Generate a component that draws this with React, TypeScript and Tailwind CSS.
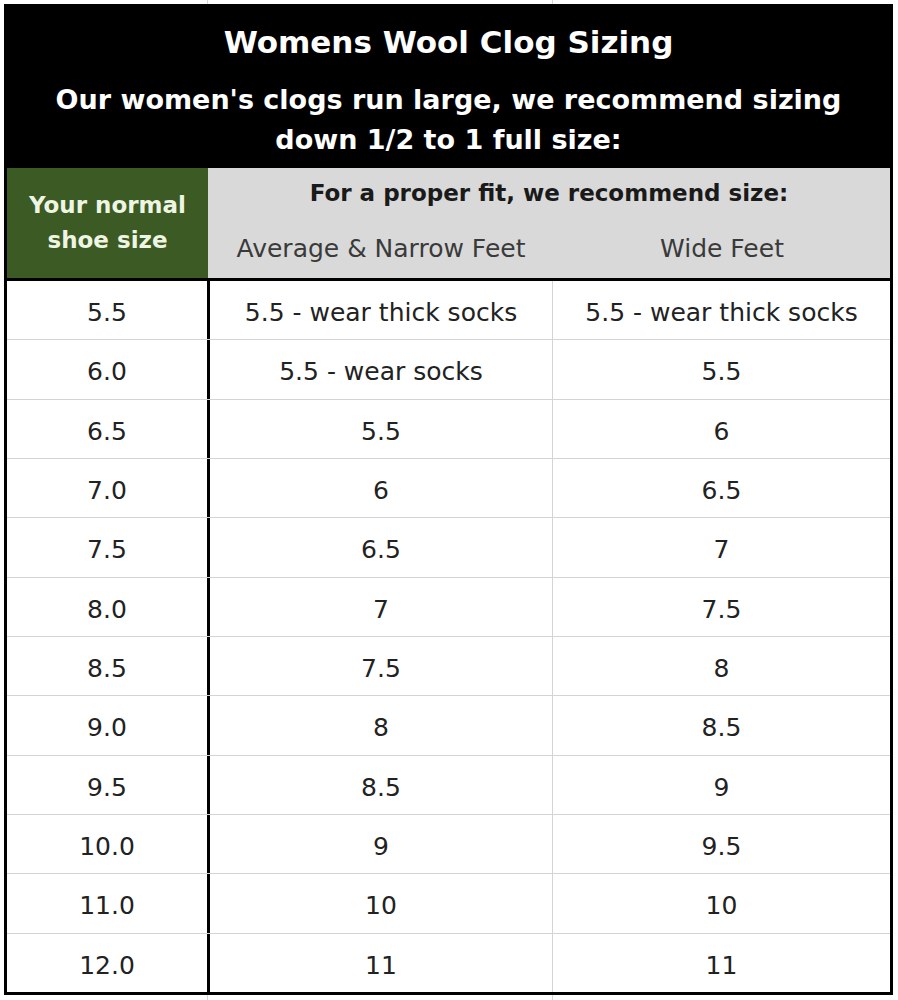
const rows: [string, string, string][] = [
  ["5.5", "5.5 - wear thick socks", "5.5 - wear thick socks"],
  ["6.0", "5.5 - wear socks", "5.5"],
  ["6.5", "5.5", "6"],
  ["7.0", "6", "6.5"],
  ["7.5", "6.5", "7"],
  ["8.0", "7", "7.5"],
  ["8.5", "7.5", "8"],
  ["9.0", "8", "8.5"],
  ["9.5", "8.5", "9"],
  ["10.0", "9", "9.5"],
  ["11.0", "10", "10"],
  ["12.0", "11", "11"],
];

const font = { fontFamily: '"DejaVu Sans", "Liberation Sans", sans-serif' };

export default function App() {
  return (
    <div className="w-[898px] h-[1000px] bg-white overflow-hidden" style={font}>
      {/* spreadsheet gridlines above */}
      <div className="flex h-[4px]">
        <div className="w-[208px] border-r border-[#d6d6d6]" />
        <div className="w-[345px] border-r border-[#d6d6d6]" />
      </div>

      <div className="ml-[4px] w-[889px] border-[3px] border-black">
        {/* title block */}
        <div className="h-[161px] bg-black text-white font-bold text-center pt-[15px]">
          <div className="text-[31px] leading-[40px]">Womens Wool Clog Sizing</div>
          <div className="mt-[18px] text-[27px] leading-[40px]">
            Our women's clogs run large, we recommend sizing
            <br />
            down 1/2 to 1 full size:
          </div>
        </div>

        {/* column headers */}
        <div className="flex h-[110px] border-b-[3px] border-black box-content">
          <div className="w-[201px] bg-[#3b5a24] flex items-center justify-center text-center">
            <div className="text-[23px] leading-[35px] font-bold text-[#eef5e2]">
              Your normal
              <br />
              shoe size
            </div>
          </div>
          <div className="flex-1 bg-[#d9d9d9] pt-[8px]">
            <div className="text-center text-[23px] leading-[34px] font-bold text-[#1a1a1a]">
              For a proper fit, we recommend size:
            </div>
            <div className="mt-[22px] flex text-[25px] leading-[34px] text-[#3a3a3a]">
              <div className="w-[346px] text-center">Average &amp; Narrow Feet</div>
              <div className="flex-1 text-center">Wide Feet</div>
            </div>
          </div>
        </div>

        {/* size rows */}
        <div className="flex flex-col h-[711px]">
          {rows.map(([normal, avg, wide], i) => (
            <div
              key={normal}
              className={`flex flex-1 text-[25px] text-[#222222] ${i > 0 ? "border-t border-[#d4d4d4]" : ""}`}
            >
              <div className="w-[200px] flex items-center justify-center pt-[5px]">{normal}</div>
              <div className="w-[3px] bg-black" />
              <div className="w-[343px] flex items-center justify-center pt-[5px] border-r border-[#d4d4d4]">
                {avg}
              </div>
              <div className="flex-1 flex items-center justify-center pt-[5px]">{wide}</div>
            </div>
          ))}
        </div>
      </div>

      {/* spreadsheet gridlines below */}
      <div className="flex h-[5px]">
        <div className="w-[208px] border-r border-[#d6d6d6]" />
        <div className="w-[345px] border-r border-[#d6d6d6]" />
      </div>
    </div>
  );
}
